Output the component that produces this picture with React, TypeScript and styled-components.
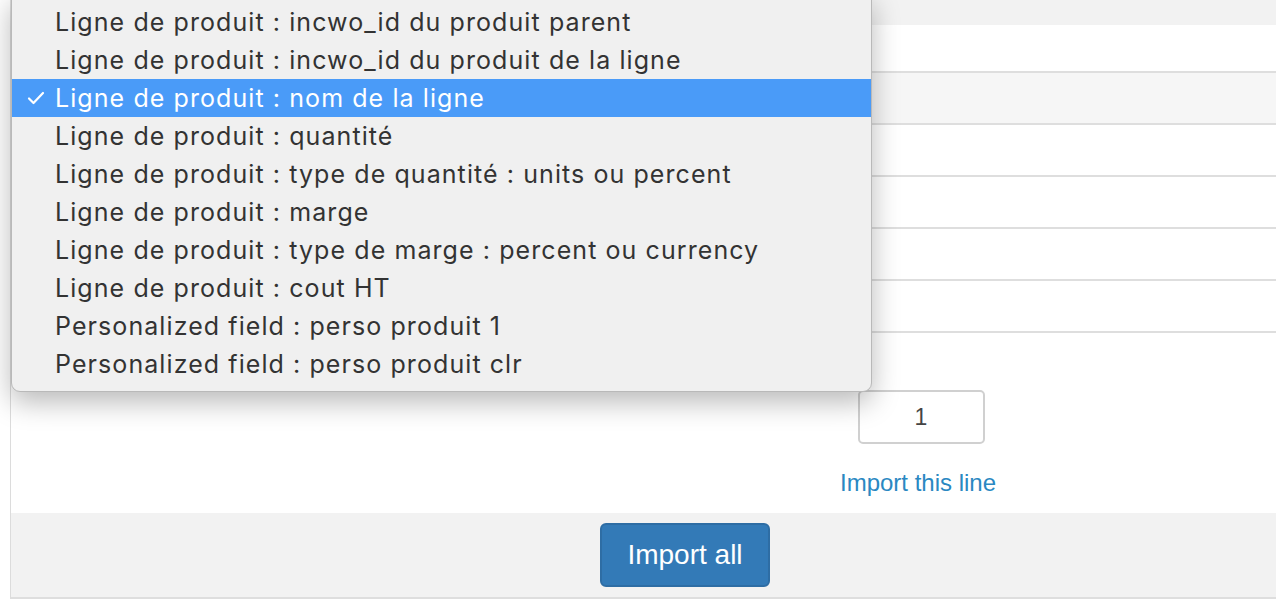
import React from 'react'
import styled, { createGlobalStyle } from 'styled-components'

const GlobalStyle = createGlobalStyle`
  html, body {
    margin: 0;
    padding: 0;
    background: #ffffff;
    overflow: hidden;
  }
  body {
    font-family: "Liberation Sans", Arial, sans-serif;
  }
`

const Page = styled.div`
  position: relative;
  width: 1276px;
  height: 607px;
  padding-left: 10px;
  box-sizing: border-box;
`

const Panel = styled.div`
  border-left: 1px solid #dcdcdc;
  border-bottom: 2px solid #dedede;
  width: 1280px;
`

const HeadRow = styled.div`
  height: 25px;
  background: #f2f2f2;
`

const Row = styled.div<{ $striped?: boolean; $first?: boolean }>`
  height: ${p => (p.$first ? 46 : 50)}px;
  background: ${p => (p.$striped ? '#f6f6f6' : '#ffffff')};
  border-bottom: 2px solid #dedede;
`

const LastRow = styled.div`
  height: 180px;
  display: flex;
  padding-left: 825px;
  box-sizing: border-box;
`

const Cell = styled.div`
  width: 168px;
  display: flex;
  flex-direction: column;
  align-items: center;
  padding-top: 57px;
`

const QtyInput = styled.input`
  width: 127px;
  height: 54px;
  box-sizing: border-box;
  border: 2px solid #d0d0d0;
  border-radius: 5px;
  text-align: center;
  font-family: "Liberation Sans", Arial, sans-serif;
  font-size: 23px;
  color: #444;
  outline: none;
  background: #fff;
  margin-left: 2px;
`

const LineLink = styled.a`
  margin-top: 25px;
  color: #2a88c2;
  font-size: 24px;
  text-decoration: none;
  margin-right: 4px;
`

const Footer = styled.div`
  height: 84px;
  background: #f2f2f2;
  display: flex;
  justify-content: flex-start;
  align-items: flex-start;
  padding-left: 589px;
  padding-top: 10px;
  box-sizing: border-box;
`

const ImportButton = styled.button`
  width: 170px;
  height: 64px;
  background: #337ab7;
  border: 2px solid #2e6da4;
  border-radius: 6px;
  color: #ffffff;
  font-family: "Liberation Sans", Arial, sans-serif;
  font-size: 28px;
  padding: 0;
`

const Menu = styled.div`
  position: absolute;
  top: -6px;
  left: 11px;
  width: 859px;
  padding: 8px 0 8px;
  background: #f0f0f0;
  border: 1px solid #b9b9b9;
  border-radius: 0 0 9px 9px;
  box-shadow: 0 10px 28px rgba(0, 0, 0, 0.28);
`

const Option = styled.div<{ $selected?: boolean }>`
  position: relative;
  height: 38px;
  display: flex;
  align-items: center;
  padding-left: 43px;
  font-family: Inter, "Liberation Sans", Arial, sans-serif;
  font-size: 25px;
  letter-spacing: 1.08px;
  color: ${p => (p.$selected ? '#ffffff' : '#333333')};
  background: ${p => (p.$selected ? '#4a9bf8' : 'transparent')};
  white-space: nowrap;
`

const Check = styled.svg`
  position: absolute;
  left: 15px;
  top: 12px;
`

const options = [
  'Ligne de produit : incwo_id du produit parent',
  'Ligne de produit : incwo_id du produit de la ligne',
  'Ligne de produit : nom de la ligne',
  'Ligne de produit : quantité',
  'Ligne de produit : type de quantité : units ou percent',
  'Ligne de produit : marge',
  'Ligne de produit : type de marge : percent ou currency',
  'Ligne de produit : cout HT',
  'Personalized field : perso produit 1',
  'Personalized field : perso produit clr',
]

export default function App() {
  return (
    <Page>
      <GlobalStyle />
      <Panel>
        <HeadRow />
        <Row $first />
        <Row $striped />
        <Row />
        <Row />
        <Row />
        <Row />
        <LastRow>
          <Cell>
            <QtyInput defaultValue="1" />
            <LineLink href="#">Import this line</LineLink>
          </Cell>
        </LastRow>
        <Footer>
          <ImportButton>Import all</ImportButton>
        </Footer>
      </Panel>
      <Menu>
        {options.map((o, i) => (
          <Option key={o} $selected={i === 2}>
            {i === 2 && (
              <Check width="18" height="14" viewBox="0 0 18 14">
                <path d="M2 7.5 L6.5 12 L16 2" fill="none" stroke="#fff" strokeWidth="2.2" strokeLinecap="round" strokeLinejoin="round" />
              </Check>
            )}
            {o}
          </Option>
        ))}
      </Menu>
    </Page>
  )
}
